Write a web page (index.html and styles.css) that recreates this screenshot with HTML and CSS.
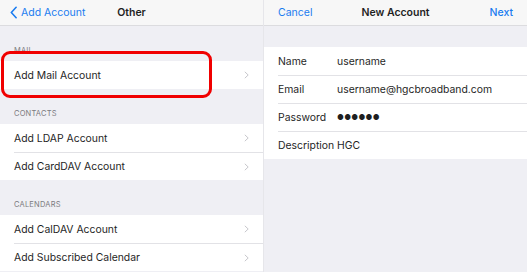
FILE: index.html
```html
<!DOCTYPE html>
<html lang="en">
<head>
    <meta charset="UTF-8">
    <meta name="viewport" content="width=device-width, initial-scale=1.0">
    <title>Mail Account Setup</title>
<link rel="stylesheet" href="styles.css">
</head>
<body>
    <div class="screens">
        <!-- Left: Other -->
        <div class="panel panel-left">
            <div class="navbar">
                <a class="nav-back">
                    <svg class="back-chevron" viewBox="0 0 8 14" width="7" height="13">
                        <path d="M7 1 L1.5 7 L7 13" fill="none" stroke="#1a7cf0" stroke-width="1.8" stroke-linecap="round" stroke-linejoin="round"/>
                    </svg>
                    Add Account
                </a>
                <span class="nav-title">Other</span>
            </div>

            <div class="section-header">MAIL</div>
            <div class="group">
                <div class="row">Add Mail Account<svg class="chevron" viewBox="0 0 5 8" width="5" height="8"><path d="M0.8 0.8 L4.2 4 L0.8 7.2" fill="none" stroke="#c7c7cc" stroke-width="1"/></svg></div>
            </div>

            <div class="section-header">CONTACTS</div>
            <div class="group">
                <div class="row">Add LDAP Account<svg class="chevron" viewBox="0 0 5 8" width="5" height="8"><path d="M0.8 0.8 L4.2 4 L0.8 7.2" fill="none" stroke="#c7c7cc" stroke-width="1"/></svg></div>
                <div class="row">Add CardDAV Account<svg class="chevron" viewBox="0 0 5 8" width="5" height="8"><path d="M0.8 0.8 L4.2 4 L0.8 7.2" fill="none" stroke="#c7c7cc" stroke-width="1"/></svg></div>
            </div>

            <div class="section-header">CALENDARS</div>
            <div class="group">
                <div class="row">Add CalDAV Account<svg class="chevron" viewBox="0 0 5 8" width="5" height="8"><path d="M0.8 0.8 L4.2 4 L0.8 7.2" fill="none" stroke="#c7c7cc" stroke-width="1"/></svg></div>
                <div class="row">Add Subscribed Calendar<svg class="chevron" viewBox="0 0 5 8" width="5" height="8"><path d="M0.8 0.8 L4.2 4 L0.8 7.2" fill="none" stroke="#c7c7cc" stroke-width="1"/></svg></div>
            </div>

            <div class="highlight"></div>
        </div>

        <!-- Right: New Account -->
        <div class="panel panel-right">
            <div class="navbar">
                <a class="nav-link">Cancel</a>
                <span class="nav-title">New Account</span>
                <a class="nav-link nav-next">Next</a>
            </div>

            <div class="form-group">
                <div class="field"><span class="field-label">Name</span><span class="field-value">username</span></div>
                <div class="field"><span class="field-label">Email</span><span class="field-value">username@hgcbroadband.com</span></div>
                <div class="field"><span class="field-label">Password</span><span class="field-value dots">&#9679;&#9679;&#9679;&#9679;&#9679;&#9679;</span></div>
                <div class="field"><span class="field-label">Description</span><span class="field-value">HGC</span></div>
            </div>
        </div>
    </div>
</body>
</html>
```

FILE: styles.css
```css
:root {
    --blue: #1a7cf0;
    --group-bg: #efeff4;
    --nav-bg: #f7f7f7;
    --separator: #e2e2e6;
    --text: #1f1f1f;
    --muted: #7b7b80;
}

* {
    margin: 0;
    padding: 0;
    box-sizing: border-box;
}

body {
    font-family: Inter, "Liberation Sans", Arial, sans-serif;
    color: var(--text);
    background: var(--group-bg);
    width: 527px;
    height: 272px;
    overflow: hidden;
}

.screens {
    display: flex;
    height: 272px;
}

.panel {
    position: relative;
    background: var(--group-bg);
    height: 100%;
}

.panel-left {
    width: 264px;
    border-right: 1px solid #e6e6ea;
}

.panel-right {
    flex: 1;
}

/* Navigation bar */
.navbar {
    position: relative;
    display: flex;
    align-items: center;
    justify-content: space-between;
    height: 26px;
    padding: 0 14px 1px 10px;
    background: var(--nav-bg);
    border-bottom: 1px solid #dcdcdf;
    font-size: 10.5px;
}

.panel-right .navbar {
    padding-left: 14px;
}

.nav-back,
.nav-link {
    display: flex;
    align-items: center;
    gap: 4px;
    color: var(--blue);
}

.nav-next {
    font-weight: 500;
}

.nav-title {
    position: absolute;
    left: 0;
    right: 0;
    text-align: center;
    font-weight: 600;
    pointer-events: none;
}

/* Grouped list */
.section-header {
    height: 35px;
    display: flex;
    align-items: flex-end;
    padding: 0 0 6px 14px;
    font-size: 7.5px;
    letter-spacing: 0.2px;
    color: var(--muted);
}

.group {
    background: #fff;
}

.row {
    display: flex;
    align-items: center;
    justify-content: space-between;
    height: 28px;
    margin-left: 14px;
    padding-right: 14px;
    font-size: 10.4px;
}

.row + .row {
    border-top: 1px solid var(--separator);
}

.chevron {
    margin-right: 0;
}

/* Red callout around the mail row */
.highlight {
    position: absolute;
    left: 1px;
    top: 51px;
    width: 211px;
    height: 47px;
    border: 3px solid #f00000;
    border-radius: 9px;
}

/* Form */
.form-group {
    margin-top: 21px;
    background: #fff;
}

.field {
    display: flex;
    align-items: center;
    height: 28px;
    margin-left: 14px;
    font-size: 10.4px;
}

.field + .field {
    border-top: 1px solid var(--separator);
}

.field-label {
    width: 59px;
    flex-shrink: 0;
}

.dots {
    font-size: 7.5px;
    letter-spacing: 0.3px;
}
```
